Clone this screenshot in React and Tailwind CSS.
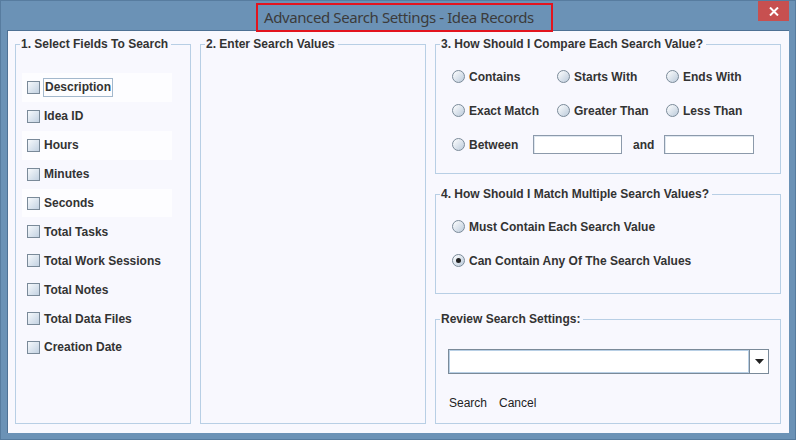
const fields = [
  { label: 'Description', focus: true, shade: true },
  { label: 'Idea ID' },
  { label: 'Hours', shade: true },
  { label: 'Minutes' },
  { label: 'Seconds', shade: true },
  { label: 'Total Tasks' },
  { label: 'Total Work Sessions' },
  { label: 'Total Notes' },
  { label: 'Total Data Files' },
  { label: 'Creation Date' },
]

function Check() {
  return <span className="w-[13px] h-[13px] shrink-0 border border-[#7a8a99] bg-gradient-to-br from-[#f6f9fc] to-[#c3d2e2]" />
}

function Radio({ checked }) {
  return (
    <span className="w-[13px] h-[13px] shrink-0 rounded-full border border-[#7a8a99] bg-gradient-to-br from-[#ffffff] to-[#bccbdb] flex items-center justify-center">
      {checked && <span className="w-[5px] h-[5px] rounded-full bg-[#222]" />}
    </span>
  )
}

function Option({ label, checked, className = '' }) {
  return (
    <div className={`flex items-center gap-[4px] ${className}`}>
      <Radio checked={checked} />
      <span>{label}</span>
    </div>
  )
}

function Panel({ title, className = '', children }) {
  return (
    <fieldset className={`border border-[#b8cfe5] min-w-0 ${className}`}>
      <legend className="ml-[4px] pl-[1px] pr-[3px] leading-[14px] font-bold">{title}</legend>
      {children}
    </fieldset>
  )
}

function Field({ className = '' }) {
  return <span className={`h-[19px] border border-[#8c9aab] bg-white shadow-[inset_1px_1px_0_#dfe7f0] ${className}`} />
}

export default function App() {
  return (
    <div className="w-[796px] h-[440px] relative bg-[#6b92b6] border border-[#577c9f] text-[12px] text-[#333333] font-['Liberation_Sans',Arial,sans-serif]">
      {/* title bar */}
      <div className="h-[29px]" />
      <div className="absolute left-[255px] top-[2px] w-[297px] h-[29px] border-2 border-[#e3141e] flex items-center pl-[6px] text-[15px] text-[#3b3b3b] font-['Noto_Sans',sans-serif] tracking-[-0.4px]">
        Advanced Search Settings - Idea Records
      </div>
      <div className="absolute right-[6px] top-0 w-[31px] h-[20px] bg-[#c75050] flex items-center justify-center">
        <svg width="10" height="9" viewBox="0 0 10 9">
          <path d="M1 0.5 L9 8.5 M9 0.5 L1 8.5" stroke="#fff" strokeWidth="2" />
        </svg>
      </div>

      {/* content */}
      <div className="ml-[6px] w-[782px] h-[403px] border-t border-l border-[#4e7194] bg-[#f8f8fe] pl-[7px] pr-[7px] pt-[6px] pb-[8px] grid grid-cols-[176px_226px_346px] gap-[9px]">
        <Panel title="1. Select Fields To Search" className="h-[387px]">
          <div className="mt-[22px] ml-[6px] w-[150px] flex flex-col font-bold">
            {fields.map(f => (
              <div key={f.label} className={`h-[28.9px] flex items-center pl-[5px] ${f.shade ? 'bg-[#fdfdff]' : ''}`}>
                <Check />
                {f.focus ? (
                  <span className="ml-[3px] px-[1px] h-[19px] flex items-center border border-[#a3b8cc]">{f.label}</span>
                ) : (
                  <span className="ml-[4px]">{f.label}</span>
                )}
              </div>
            ))}
          </div>
        </Panel>

        <Panel title="2. Enter Search Values" className="h-[387px]" />

        <div className="flex flex-col">
          <Panel title="3. How Should I Compare Each Search Value?" className="h-[137px]">
            <div className="mt-[19px] pl-[16px] flex flex-col gap-[21px] font-bold">
              <div className="flex h-[13px] items-center">
                <Option label="Contains" className="w-[105px]" />
                <Option label="Starts With" className="w-[109px]" />
                <Option label="Ends With" />
              </div>
              <div className="flex h-[13px] items-center">
                <Option label="Exact Match" className="w-[105px]" />
                <Option label="Greater Than" className="w-[109px] gap-[3px]" />
                <Option label="Less Than" />
              </div>
              <div className="flex h-[13px] items-center">
                <Option label="Between" className="w-[81px]" />
                <Field className="w-[89px]" />
                <span className="ml-[11px] w-[31px]">and</span>
                <Field className="w-[90px]" />
              </div>
            </div>
          </Panel>

          <Panel title="4. How Should I Match Multiple Search Values?" className="h-[107px] mt-[13px]">
            <div className="mt-[19px] pl-[16px] flex flex-col gap-[21px] font-bold">
              <Option label="Must Contain Each Search Value" className="h-[13px]" />
              <Option label="Can Contain Any Of The Search Values" checked className="h-[13px]" />
            </div>
          </Panel>

          <Panel title="Review Search Settings:" className="h-[112px] mt-[18px]">
            <div className="mt-[23px] ml-[12px] w-[321px] h-[25px] flex border border-[#7a8a99] bg-white">
              <span className="flex-1 border border-[#b8cfe5]" />
              <span className="w-[19px] border-l border-[#7a8a99] flex items-center justify-center">
                <svg width="9" height="5" viewBox="0 0 9 5">
                  <path d="M0 0 H9 L4.5 5 Z" fill="#222" />
                </svg>
              </span>
            </div>
            <div className="mt-[20px] ml-[13px] flex gap-[12px] text-[#222]">
              <span>Search</span>
              <span>Cancel</span>
            </div>
          </Panel>
        </div>
      </div>
    </div>
  )
}
